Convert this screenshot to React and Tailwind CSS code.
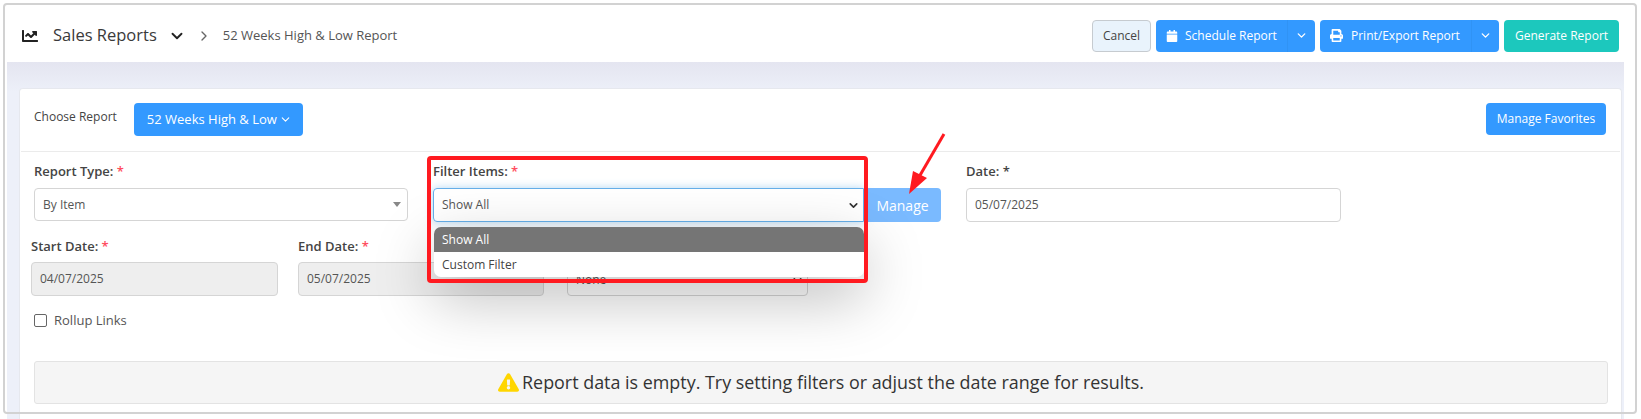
import React from "react";
import { FaChartLine, FaCalendar, FaPrint, FaExclamationTriangle } from "react-icons/fa";
import { ChevronDown, ChevronRight } from "lucide-react";

function Label({ children, star = true, className = "" }) {
  return (
    <div className={`text-[13px] leading-[18px] font-semibold text-[#444] ${className}`}>
      {children}
      {star && <span className="text-[#ff4d5e]"> *</span>}
    </div>
  );
}

function SplitButton({ icon, label, gap, className }) {
  return (
    <div className={`flex h-[32px] rounded-[4px] bg-[#3399ff] text-white text-[12px] ${className}`}>
      <div className={`flex flex-1 items-center ${gap} pl-[10px] border-r border-[#3093f5]`}>
        {icon}
        <span>{label}</span>
      </div>
      <div className="flex w-[27px] items-center justify-center">
        <ChevronDown size={13} strokeWidth={2.5} />
      </div>
    </div>
  );
}

function DateInput({ value, className = "" }) {
  return (
    <div className={`flex h-[34px] items-center rounded-[4px] border border-[#d5d5d5] px-[8px] text-[12px] text-[#555] ${className}`}>
      {value}
    </div>
  );
}

export default function App() {
  return (
    <div className="relative h-[419px] w-[1641px] overflow-hidden bg-white font-['Open_Sans',sans-serif] text-[#444]">
      <div className="pl-[7px] pr-[17px]">
        <header className="flex h-[62px] items-center pl-[15px] pr-[5px] pt-[9px]">
          <FaChartLine size={16} className="text-[#222]" />
          <span className="ml-[15px] text-[16.5px] text-[#3a3a3a]">Sales Reports</span>
          <ChevronDown size={18} strokeWidth={2.5} className="ml-[11px] text-[#222]" />
          <ChevronRight size={16} strokeWidth={2} className="ml-[10px] text-[#666]" />
          <span className="ml-[11px] text-[13px] text-[#555]">52 Weeks High &amp; Low Report</span>
          <div className="ml-auto flex items-center gap-[5px]">
            <button className="h-[32px] w-[59px] rounded-[4px] border border-[#c6cbd0] bg-[#e9f3fc] text-[12px] text-[#444]">Cancel</button>
            <SplitButton className="w-[159px]" gap="gap-[7px]" icon={<FaCalendar size={12} />} label="Schedule Report" />
            <SplitButton className="w-[179px]" gap="gap-[8px]" icon={<FaPrint size={13} />} label="Print/Export Report" />
            <button className="h-[32px] w-[115px] rounded-[4px] bg-[#1cc8bd] text-[12px] text-white">Generate Report</button>
          </div>
        </header>

        <main className="h-[357px] bg-gradient-to-b from-[#e4e5f0] to-[#edf0f9] to-[30px] pl-[12px] pr-[2px] pt-[26px]">
          <div className="h-[331px] rounded-t-[4px] border border-[#e6e8ee] border-b-0 bg-white">
            <div className="mx-[1px] flex h-[63px] items-start border-b border-[#ebebeb] pl-[13px] pr-[14px] pt-[14px]">
              <span className="mt-[5px] text-[12px] font-medium text-[#444]">Choose Report</span>
              <button className="ml-[17px] flex h-[33px] w-[169px] items-center justify-center gap-[2px] rounded-[4px] bg-[#3399ff] pl-[2px] text-[13px] text-white">
                52 Weeks High &amp; Low
                <ChevronDown size={13} strokeWidth={2} />
              </button>
              <button className="ml-auto h-[32px] w-[120px] rounded-[4px] bg-[#3399ff] text-[12px] text-white">Manage Favorites</button>
            </div>

            <div className="mt-[10px] flex pl-[14px]">
              <div className="w-[374px]">
                <Label>Report Type:</Label>
                <div className="mt-[8px] flex h-[33px] items-center justify-between rounded-[4px] border border-[#d5d5d5] pl-[8px] pr-[6px] text-[12px] text-[#555]">
                  By Item
                  <span className="h-0 w-0 border-x-[4px] border-t-[5px] border-x-transparent border-t-[#888]" />
                </div>
              </div>
              <div className="ml-[25px]">
                <Label>Filter Items:</Label>
                <div className="mt-[8px] flex h-[34px]">
                  <div className="flex w-[431px] items-center justify-between rounded-l-[4px] border border-[#66afe9] pl-[8px] pr-[3px] text-[12px] text-[#555] shadow-[0_0_8px_rgba(102,175,233,0.5)]">
                    Show All
                    <ChevronDown size={13} strokeWidth={3} className="text-[#333]" />
                  </div>
                  <button className="w-[77px] rounded-r-[4px] bg-[#7abaff] text-[14px] text-white">Manage</button>
                </div>
              </div>
              <div className="ml-[25px] w-[375px]">
                <Label star={false}>Date: *</Label>
                <DateInput className="mt-[8px]" value="05/07/2025" />
              </div>
            </div>

            <div className="mt-[15px] flex pl-[11px]">
              <div className="w-[247px]">
                <Label>Start Date:</Label>
                <DateInput className="mt-[7px] bg-[#eeeeee]" value="04/07/2025" />
              </div>
              <div className="ml-[20px] w-[246px]">
                <Label>End Date:</Label>
                <DateInput className="mt-[7px] bg-[#eeeeee]" value="05/07/2025" />
              </div>
              <div className="ml-[23px] w-[241px] pt-[25px]">
                <div className="flex h-[34px] items-center justify-between rounded-[4px] border border-[#d5d5d5] pl-[8px] pr-[3px] pt-[2px] text-[12px] text-[#555]">
                  None
                  <ChevronDown size={13} strokeWidth={3} className="text-[#333]" />
                </div>
              </div>
            </div>

            <label className="ml-[14px] mt-[15px] flex items-center gap-[7px] text-[13px] text-[#555]">
              <span className="h-[13px] w-[13px] rounded-[2px] border border-[#666] bg-white" />
              Rollup Links
            </label>

            <div className="ml-[14px] mr-[13px] mt-[30px] flex h-[43px] items-center justify-center gap-[3px] rounded-[3px] border border-[#e3e3e3] bg-[#f5f5f5] text-[17.9px] text-[#333]">
              <FaExclamationTriangle size={21} className="text-[#ffd600]" />
              Report data is empty. Try setting filters or adjust the date range for results.
            </div>
          </div>
        </main>
      </div>

      {/* Open dropdown list, over the form */}
      <div className="absolute left-[434px] top-[227px] w-[430px] overflow-hidden rounded-[7px] bg-white text-[12px] shadow-[0_20px_60px_rgba(0,0,0,0.28)]">
        <div className="flex h-[25px] items-center bg-[#757575] pl-[8px] text-white">Show All</div>
        <div className="flex h-[25px] items-center pl-[8px] text-[#444]">Custom Filter</div>
      </div>

      {/* Annotation: red highlight box */}
      <div className="pointer-events-none absolute left-[427px] top-[156px] h-[127px] w-[441px] rounded-[4px] border-[4px] border-[#ff1a20]" />

      {/* Annotation: red arrow */}
      <svg className="pointer-events-none absolute left-[900px] top-[128px]" width="52" height="72" viewBox="0 0 52 72">
        <line x1="44" y1="6" x2="19" y2="49" stroke="#ff1a20" strokeWidth="3" />
        <polygon points="9,66 13,43 27,50" fill="#ff1a20" />
      </svg>

      {/* Annotation: screenshot frame */}
      <div className="pointer-events-none absolute left-[3px] top-[3px] h-[411px] w-[1634px] rounded-[4px] border-[2px] border-[#d2d2d2]" />
    </div>
  );
}
